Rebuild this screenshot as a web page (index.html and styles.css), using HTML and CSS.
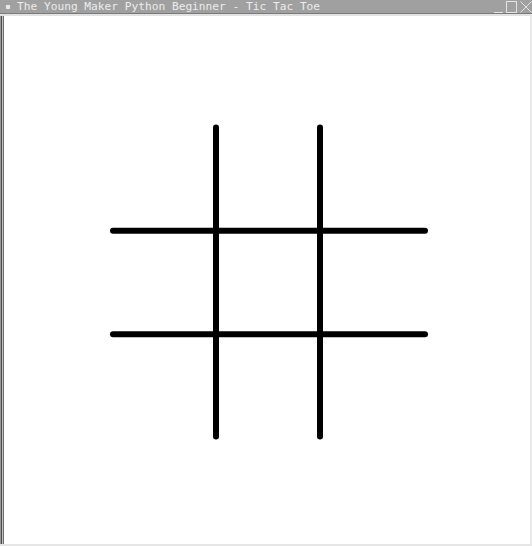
FILE: index.html
```html
<!DOCTYPE html>
<html>
<head>
<meta charset="utf-8">
<link rel="stylesheet" href="styles.css">
</head>
<body>
<div class="window">
  <div class="titlebar">
    <span class="menu-dot"></span>
    <span class="title">The Young Maker Python Beginner - Tic Tac Toe</span>
    <div class="controls">
      <span class="btn-min"></span>
      <span class="btn-max"></span>
      <svg class="btn-close" width="12" height="12" viewBox="0 0 12 12"><path d="M0.5 0.5L11.5 11.5M11.5 0.5L0.5 11.5" stroke="#e4e4e4" stroke-width="1"/></svg>
    </div>
  </div>
  <div class="frame">
    <div class="edge"></div>
    <svg class="board" viewBox="4 17 526 526" preserveAspectRatio="none">
      <g stroke="#000" stroke-width="6" stroke-linecap="round">
        <line x1="216" y1="128" x2="216" y2="436"/>
        <line x1="320" y1="128" x2="320" y2="436"/>
        <line x1="113" y1="231" x2="425" y2="231"/>
        <line x1="113" y1="334" x2="425" y2="334"/>
      </g>
    </svg>
  </div>
</div>
</body>
</html>
```
FILE: styles.css
```css
html, body {
  margin: 0;
  padding: 0;
  background: #ffffff;
}
.window {
  width: 532px;
  height: 546px;
  display: flex;
  flex-direction: column;
  background: #ffffff;
}
.titlebar {
  height: 14px;
  flex: none;
  background: #a0a0a0;
  border-bottom: 1px solid #7a7a7a;
  display: flex;
  align-items: center;
  padding-left: 6px;
  box-sizing: border-box;
}
.menu-dot {
  width: 4px;
  height: 4px;
  background: #e6e6e6;
  margin-right: 7px;
  flex: none;
}
.title {
  font-family: "DejaVu Sans Mono", "Liberation Mono", monospace;
  font-size: 11.2px;
  line-height: 13px;
  color: #ececec;
  white-space: nowrap;
}
.controls {
  margin-left: auto;
  display: flex;
  align-items: center;
  gap: 3px;
  height: 13px;
}
.btn-min {
  width: 9px;
  height: 12px;
  border-bottom: 1px solid #e4e4e4;
  box-sizing: border-box;
}
.btn-max {
  width: 11px;
  height: 12px;
  border: 1px solid #e4e4e4;
  box-sizing: border-box;
}
.btn-close {
  display: block;
}
.frame {
  flex: 1;
  border-top: 2px solid #e2e2e2;
  border-right: 2px solid #e8e8e8;
  border-bottom: 2px solid #e6e6e6;
  display: flex;
}
.edge {
  flex: none;
  width: 4px;
  background: linear-gradient(to right, #9a9a9a 0 1px, #4a4a4a 1px 2px, #c4c4c4 2px 3px, #6a6a6a 3px 4px);
}
.board {
  flex: 1;
  width: 100%;
  height: 100%;
  display: block;
}
```
